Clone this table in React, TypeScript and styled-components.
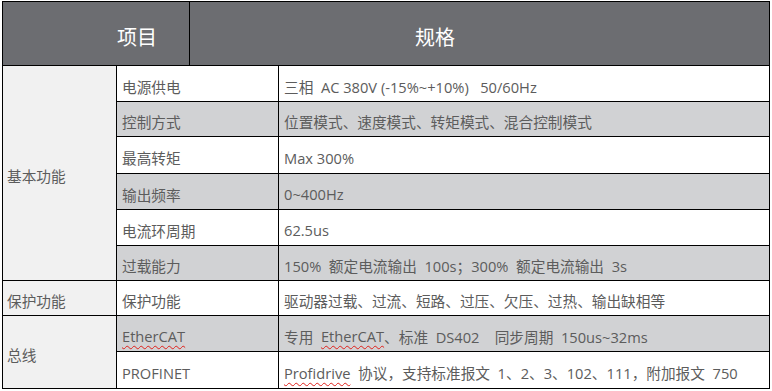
import React from "react";
import styled, { createGlobalStyle } from "styled-components";

const Global = createGlobalStyle`
  html, body { margin: 0; padding: 0; background: #ffffff; }
  body { font-family: "Open Sans", "Noto Sans CJK SC", sans-serif; }
`;

const Page = styled.div`
  padding: 1px 0 0 2px;
`;

const Table = styled.div`
  width: 768px;
  box-sizing: border-box;
  background: #000000;
  padding: 1px;
  display: flex;
  flex-direction: column;
  gap: 1px;
`;

const HeaderRow = styled.div`
  display: grid;
  grid-template-columns: 186px 579px;
  gap: 1px;
  height: 63px;
`;

const HeaderCell = styled.div<{ $indent: number }>`
  background: #6c6d71;
  color: #ffffff;
  font-family: "Noto Sans CJK SC", sans-serif;
  font-size: 20px;
  display: flex;
  align-items: center;
  padding: 6px 0 0 ${(p) => p.$indent}px;
  box-sizing: border-box;
`;

const Body = styled.div`
  display: grid;
  grid-template-columns: 113px 161px 490px;
  grid-template-rows: 35px 34px 36px 35px 35px 34px 34px 35px 36px;
  gap: 1px;
`;

const Category = styled.div<{ $span: number }>`
  grid-row: span ${(p) => p.$span};
  background: #f1f1f1;
  color: #5c5c5c;
  font-size: 14.67px;
  display: flex;
  align-items: center;
  padding: 4px 0 0 4px;
  box-sizing: border-box;
`;

const Cell = styled.div<{ $shaded: boolean }>`
  background: ${(p) => (p.$shaded ? "#d1d2d4" : "#ffffff")};
  color: #5c5c5c;
  font-size: 14.67px;
  display: flex;
  align-items: center;
  padding: 5px 0 0 5px;
  box-sizing: border-box;
  white-space: pre;
`;

const Spell = styled.span`
  text-decoration: underline wavy #e0201a;
  text-decoration-thickness: 1px;
  text-underline-offset: 3px;
`;

type Row = { name: React.ReactNode; spec: React.ReactNode };

const rows: Row[] = [
  { name: "电源供电", spec: "三相  AC 380V (-15%~+10%)   50/60Hz" },
  { name: "控制方式", spec: "位置模式、速度模式、转矩模式、混合控制模式" },
  { name: "最高转矩", spec: "Max 300%" },
  { name: "输出频率", spec: "0~400Hz" },
  { name: "电流环周期", spec: "62.5us" },
  { name: "过载能力", spec: "150%  额定电流输出  100s；300%  额定电流输出  3s" },
  { name: "保护功能", spec: "驱动器过载、过流、短路、过压、欠压、过热、输出缺相等" },
  {
    name: <Spell>EtherCAT</Spell>,
    spec: (
      <>
        专用  <Spell>EtherCAT</Spell>、标准  DS402    同步周期  150us~32ms
      </>
    ),
  },
  {
    name: "PROFINET",
    spec: (
      <>
        <Spell>Profidrive</Spell>  协议，支持标准报文  1、2、3、102、111，附加报文  750
      </>
    ),
  },
];

const categories: Record<number, { label: string; span: number }> = {
  0: { label: "基本功能", span: 6 },
  6: { label: "保护功能", span: 1 },
  7: { label: "总线", span: 2 },
};

export default function App() {
  return (
    <Page>
      <Global />
      <Table>
        <HeaderRow>
          <HeaderCell $indent={114}>项目</HeaderCell>
          <HeaderCell $indent={225}>规格</HeaderCell>
        </HeaderRow>
        <Body>
          {rows.map((r, i) => (
            <React.Fragment key={i}>
              {categories[i] && (
                <Category $span={categories[i].span}>{categories[i].label}</Category>
              )}
              <Cell $shaded={i % 2 === 1}>{r.name}</Cell>
              <Cell $shaded={i % 2 === 1}>{r.spec}</Cell>
            </React.Fragment>
          ))}
        </Body>
      </Table>
    </Page>
  );
}
